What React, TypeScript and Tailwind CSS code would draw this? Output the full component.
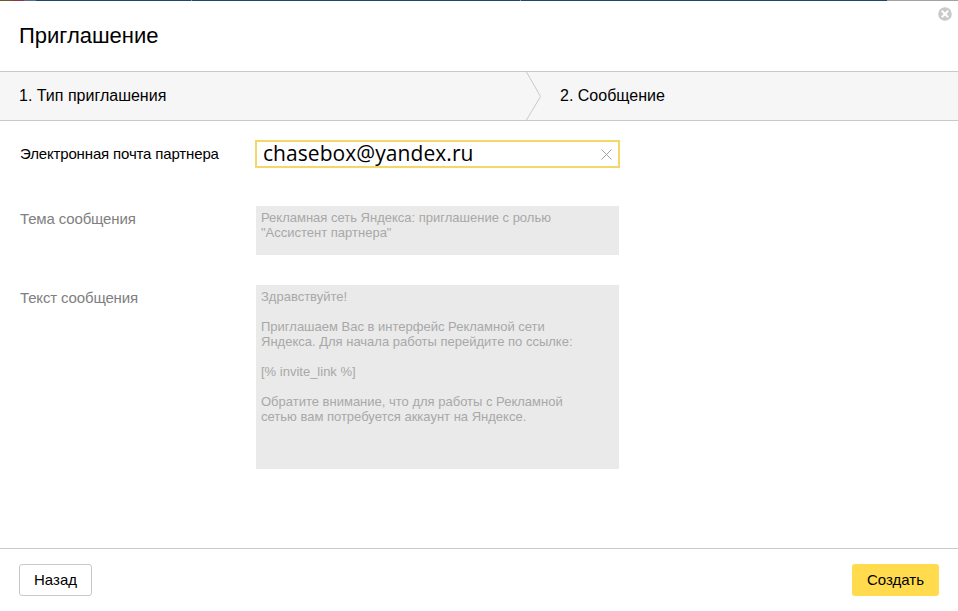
import React from 'react';

const message = `Здравствуйте!

Приглашаем Вас в интерфейс Рекламной сети
Яндекса. Для начала работы перейдите по ссылке:

[% invite_link %]

Обратите внимание, что для работы с Рекламной
сетью вам потребуется аккаунт на Яндексе.`;

const subject = `Рекламная сеть Яндекса: приглашение с ролью
"Ассистент партнера"`;

function TopStrip() {
  return (
    <div className="flex h-px">
      <div className="w-3 bg-[#6b5a2c]" />
      <div className="w-3 bg-[#8f3644]" />
      <div className="w-3 bg-[#5d6a94]" />
      <div className="w-[155px] bg-[#1f456d]" />
      <div className="w-px bg-[#7f95ab]" />
      <div className="w-[328px] bg-[#1f456d]" />
      <div className="w-px bg-[#7f95ab]" />
      <div className="w-[366px] bg-[#1f456d]" />
      <div className="flex-1 bg-[#a3a1a2]" />
    </div>
  );
}

function Header() {
  return (
    <header className="flex h-[70px] justify-between pl-[19px] pr-[6px]">
      <h1 className="mt-5 text-[22px] leading-[30px]">Приглашение</h1>
      <button aria-label="Закрыть" className="mt-[6px] size-[14px]">
        <svg viewBox="0 0 14 14" className="block size-[14px]">
          <circle cx="7" cy="7" r="6.8" fill="#c9c9c9" />
          <path d="M3.8 3.8l6.4 6.4M10.2 3.8l-6.4 6.4" stroke="#fff" strokeWidth="2" />
        </svg>
      </button>
    </header>
  );
}

function Steps() {
  return (
    <nav className="flex h-[50px] border-y border-[#c9c9c9] bg-[#f6f6f6] text-base leading-[48px]">
      <div className="w-[526px] pl-[19px]">1. Тип приглашения</div>
      <svg viewBox="0 0 16 48" className="block h-12 w-4">
        <path d="M0.5 0L14.5 24.5L0.5 48" fill="none" stroke="#c9c9c9" />
      </svg>
      <div className="pl-[18px]">2. Сообщение</div>
    </nav>
  );
}

export default function App() {
  return (
    <div className="flex h-[611px] w-[958px] flex-col overflow-hidden bg-white font-['Liberation_Sans',Arial,sans-serif] text-black">
      <TopStrip />
      <Header />
      <Steps />
      <main className="flex h-[427px] flex-col pl-5 pt-[19px] text-[15px]">
        <div className="flex h-7">
          <label className="w-[235px] leading-7 tracking-[-0.15px]">Электронная почта партнера</label>
          <div className="flex w-[365px] items-center justify-between border-2 border-[#f3d768] pl-[6px] pr-[6px]">
            <span className="-mt-px font-['Open_Sans','Noto_Sans',sans-serif] text-[21px] leading-[23px] tracking-[0.06px]">chasebox@yandex.ru</span>
            <svg viewBox="0 0 11 11" className="size-[11px]">
              <path d="M0.5 0.5l10 10M10.5 0.5l-10 10" stroke="#999" strokeWidth="0.9" />
            </svg>
          </div>
        </div>
        <div className="mt-[38px] flex h-[49px]">
          <label className="w-[236px] pt-1 leading-[18px] tracking-[-0.15px] text-[#808080]">Тема сообщения</label>
          <div className="w-[363px] whitespace-pre bg-[#eaeaea] pl-[5px] pt-[4px] text-[13px] leading-[15px] text-[#a8a8a8]">{subject}</div>
        </div>
        <div className="mt-[30px] flex h-[184px]">
          <label className="w-[236px] pt-1 leading-[18px] tracking-[-0.15px] text-[#808080]">Текст сообщения</label>
          <div className="w-[363px] whitespace-pre bg-[#eaeaea] pl-[5px] pt-[4px] text-[13px] leading-[15px] text-[#a8a8a8]">{message}</div>
        </div>
      </main>
      <footer className="flex flex-1 items-start justify-between border-t border-[#c9c9c9] px-[19px] pt-[15px] text-[15px]">
        <button className="h-8 w-[73px] rounded-[3px] border border-[#c9c9c9] bg-white">Назад</button>
        <button className="h-8 w-[87px] rounded-[3px] bg-[#ffdb4d]">Создать</button>
      </footer>
    </div>
  );
}
